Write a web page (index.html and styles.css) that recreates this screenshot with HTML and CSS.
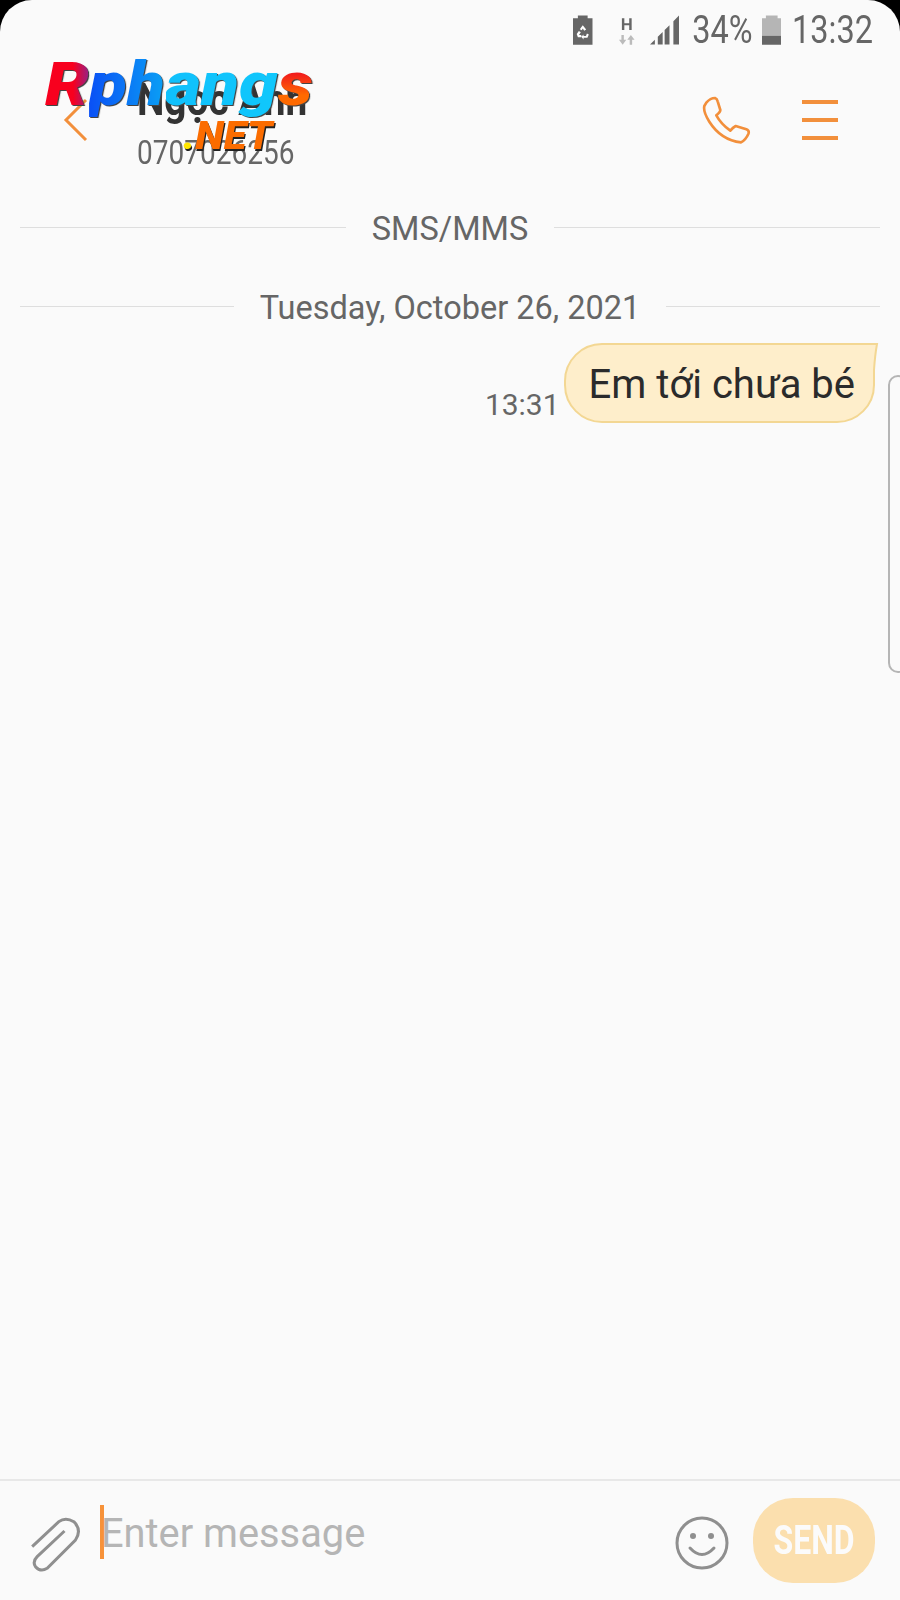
FILE: index.html

```html
<!DOCTYPE html>
<html lang="vi">
<head>
    <meta charset="UTF-8">
    <title>Ngọc Anh</title>
    <link rel="stylesheet" href="styles.css">
</head>
<body>
    <div class="phone">
        <div class="status">
            <svg class="ic-saver" width="20" height="30" viewBox="0 0 20 30">
                <path d="M5 0h10v3h5v27H0V3h5z" fill="#666"/>
                <path d="M10 10l3.500 4.500-2 1.200L10 13.500l-1 1.700-2-1zM3.800 19l2.200-3 2 1.200-1.800 3h2.300v2.300H5zM16.200 19.500L14.800 23h-4v1.800L8.500 22l2.300-2.500v1.600h2.500l1-2.500z" fill="#fff"/>
            </svg>
            <svg class="ic-net" width="20" height="30" viewBox="0 0 20 30">
                <path d="M4 3h2.500v5h5V3H14v12h-2.500v-5h-5v5H4z" fill="#666"/>
                <path d="M1 25h2.500v-5h2.500v5h2.500l-3.700 5zM12 25H9.500l3.700-5 3.800 5h-2.500v5H12z" fill="#bbb"/>
            </svg>
            <svg class="ic-signal" width="30" height="30" viewBox="0 0 30 30">
                <path d="M0 30l5-5v5zM8 22l5-5v13H8zM15 15l5-5v20h-5zM24 6l6-6v30h-6z" fill="#666"/>
            </svg>
            <span class="status-text pct">34%</span>
            <svg class="ic-batt" width="20" height="30" viewBox="0 0 20 30">
                <path d="M4 0h12v3h4v18H0V3h4z" fill="#b5b5b5"/>
                <path d="M0 21h20v9H0z" fill="#666"/>
            </svg>
            <span class="status-text clock">13:32</span>
        </div>

        <div class="topbar">
            <svg class="back" width="26" height="44" viewBox="0 0 26 44">
                <path d="M23 2L3 22l20 20" fill="none" stroke="#f28f3b" stroke-width="3"/>
            </svg>
            <div class="who">
                <div class="name">Ngọc Anh</div>
                <div class="number">0707026256</div>
            </div>
            <svg class="call" width="50" height="50" viewBox="450 285 150 150">
                <path d="M466 308Q478 294 492 294Q498 296 500 304L508 330Q508 336 496 346Q510 372 538 392Q546 382 554 378L586 388Q596 392 592 402Q584 420 570 427Q510 420 475 365Q456 335 460 318Z" fill="none" stroke="#f28f3b" stroke-width="8" stroke-linejoin="round"/>
            </svg>
            <div class="menu"><i></i><i></i><i></i></div>
        </div>

        <div class="chat">
            <div class="sep sep-sms"><span>SMS/MMS</span></div>
            <div class="sep sep-date"><span>Tuesday, October 26, 2021</span></div>
            <div class="msg">
                <span class="msg-time">13:31</span>
                <div class="bubble">
                    Em tới chưa bé
                    <svg class="tail" width="8" height="28" viewBox="0 0 8 28">
                        <path d="M0 1h6Q4 12 3 27H0z" fill="#feeecb"/>
                        <path d="M0 1h6Q4 12 3 27" fill="none" stroke="#f3d793" stroke-width="2"/>
                    </svg>
                </div>
            </div>
        </div>

        <div class="inputbar">
            <svg class="clip" width="57" height="60" viewBox="80 150 170 180">
                <path d="M95 245L175 170Q195 155 220 170Q245 195 225 225L140 310Q120 322 105 305Q95 290 110 275L192 198" fill="none" stroke="#8f8f8f" stroke-width="9"/>
            </svg>
            <div class="field">
                <span class="caret"></span>
                <span class="placeholder">Enter message</span>
            </div>
            <svg class="smile" width="54" height="54" viewBox="0 0 54 54">
                <circle cx="27" cy="27" r="25" fill="none" stroke="#8f8f8f" stroke-width="3"/>
                <circle cx="18" cy="20" r="3" fill="#8f8f8f"/>
                <circle cx="36" cy="20" r="3" fill="#8f8f8f"/>
                <path d="M15 32Q27 45 39 32" fill="none" stroke="#8f8f8f" stroke-width="3" stroke-linecap="round"/>
            </svg>
            <div class="send"><span>SEND</span></div>
        </div>

        <div class="edge"></div>

        <!-- watermark sits over the header -->
        <div class="logo">
            <span class="l-r">R</span><span class="l-ph">ph</span><span class="l-ang">ang</span><span class="l-s">s</span>
        </div>
        <div class="logo-net"><span class="l-dot">.</span>NET</div>
    </div>
</body>
</html>
```

FILE: styles.css

```css
html, body {
    margin: 0;
    background: #000;
}
.phone {
    position: relative;
    width: 900px;
    height: 1600px;
    background: #fafafa;
    border-radius: 32px 32px 0 0;
    overflow: hidden;
    display: flex;
    flex-direction: column;
    font-family: Roboto, "Noto Sans", sans-serif;
    color: #666;
}

/* status bar */
.status {
    height: 62px;
    display: flex;
    align-items: center;
    padding: 0 27px 2px 573px;
    box-sizing: border-box;
}
.ic-net { margin-left: 25px; }
.ic-signal { margin-left: 13px; }
.ic-batt { margin-left: 9px; }
.status-text {
    display: inline-block;
    transform: scaleY(1.18);
    font-size: 32.5px;
    line-height: 36px;
}
.pct { margin-left: 13px; }
.clock { margin-left: 11px; }

/* header */
.topbar {
    height: 120px;
    display: flex;
    align-items: center;
}
.back { margin: 0 0 4px 63px; }
.who {
    margin-left: 48px;
    padding-top: 10px;
    width: 564px;
}
.name {
    font-size: 38.800px;
    font-weight: 700;
    color: #333;
    line-height: 42px;
    transform: scaleY(1.16);
    transform-origin: left center;
}
.number {
    margin-top: 10px;
    font-size: 28px;
    line-height: 44px;
    transform: scaleY(1.18);
    transform-origin: left center;
}
.call { margin: 0 0 4px 0; }
.menu {
    margin: 0 0 4px 51px;
    width: 36px;
    display: flex;
    flex-direction: column;
    gap: 14px;
}
.menu i {
    display: block;
    height: 4px;
    background: #f28f3b;
}

/* conversation */
.chat {
    flex: 1;
    padding: 30px 20px 0;
}
.sep {
    display: flex;
    align-items: center;
    gap: 26px;
    font-size: 32.5px;
    line-height: 30px;
}
.sep::before, .sep::after {
    content: "";
    flex: 1;
    height: 1px;
    background: #dedede;
}
.sep span {
    position: relative;
    top: 2px;
}
.sep-date { margin-top: 49px; }
.msg {
    margin-top: 22px;
    display: flex;
    justify-content: flex-end;
    align-items: flex-end;
    gap: 4px;
    padding-right: 5px;
}
.msg-time {
    font-size: 30px;
    line-height: 34px;
    margin-bottom: 1px;
}
.bubble {
    position: relative;
    height: 80px;
    box-sizing: border-box;
    padding: 3px 18px 0 23px;
    display: flex;
    align-items: center;
    font-size: 40px;
    color: #2b2b2b;
    background: #feeecb;
    border: 2px solid #f3d793;
    border-radius: 38px 0 38px 38px;
}
.tail {
    position: absolute;
    top: -2px;
    right: -6px;
}

/* bottom input */
.inputbar {
    height: 121px;
    box-sizing: border-box;
    border-top: 2px solid #e8e8e8;
    display: flex;
    align-items: center;
    padding-left: 27px;
}
.clip { margin: 9px 0 0 0; }
.field {
    width: 592px;
    margin-left: 16px;
    display: flex;
    align-items: center;
    margin-top: -18px;
}
.caret {
    width: 4px;
    height: 54px;
    background: #f79239;
}
.placeholder {
    margin-left: -3px;
    padding-top: 4px;
    font-size: 39.800px;
    color: #b5b5b5;
}
.smile { margin: 4px 0 0 -17px; }
.send {
    width: 122px;
    height: 85px;
    margin: -1px 0 0 24px;
    border-radius: 40px;
    background: #fbdfae;
    color: #fbfbfb;
    font-size: 32px;
    font-weight: 700;
    display: flex;
    align-items: center;
    justify-content: center;
}
.send span {
    display: inline-block;
    transform: scaleY(1.25);
}

/* side panel handle */
.edge {
    position: absolute;
    left: 888px;
    top: 375px;
    width: 20px;
    height: 298px;
    box-sizing: border-box;
    border: 2px solid #b5b5b5;
    border-radius: 14px;
}

/* watermark */
.logo {
    position: absolute;
    left: 45px;
    top: 47px;
    font-size: 60px;
    line-height: 76px;
    font-weight: 900;
    font-style: italic;
    white-space: nowrap;
    transform: scaleX(1.16);
    transform-origin: left center;
    filter: drop-shadow(1px 1px 0 #444);
}
.logo span {
    padding-right: 6px;
    margin-right: -6px;
    background-clip: text;
    -webkit-background-clip: text;
    color: transparent;
}
.l-r { background-image: linear-gradient(90deg, #f8001e 55%, #6a2fb5); }
.l-ph { background-image: linear-gradient(90deg, #0a50f5, #0aa8f5); }
.l-ang { background-image: linear-gradient(90deg, #10c0fc, #10c8fc); }
.l-s { background-image: linear-gradient(180deg, #f01020 30%, #ff6a00 65%); }
.logo-net {
    position: absolute;
    left: 183px;
    top: 117px;
    font-size: 38px;
    line-height: 38px;
    font-weight: 900;
    font-style: italic;
    color: #fb6c00;
    transform: scaleX(1.1);
    transform-origin: left center;
    text-shadow: 1px 2px 0 #222;
}
.l-dot { color: #ffe600; }
```
